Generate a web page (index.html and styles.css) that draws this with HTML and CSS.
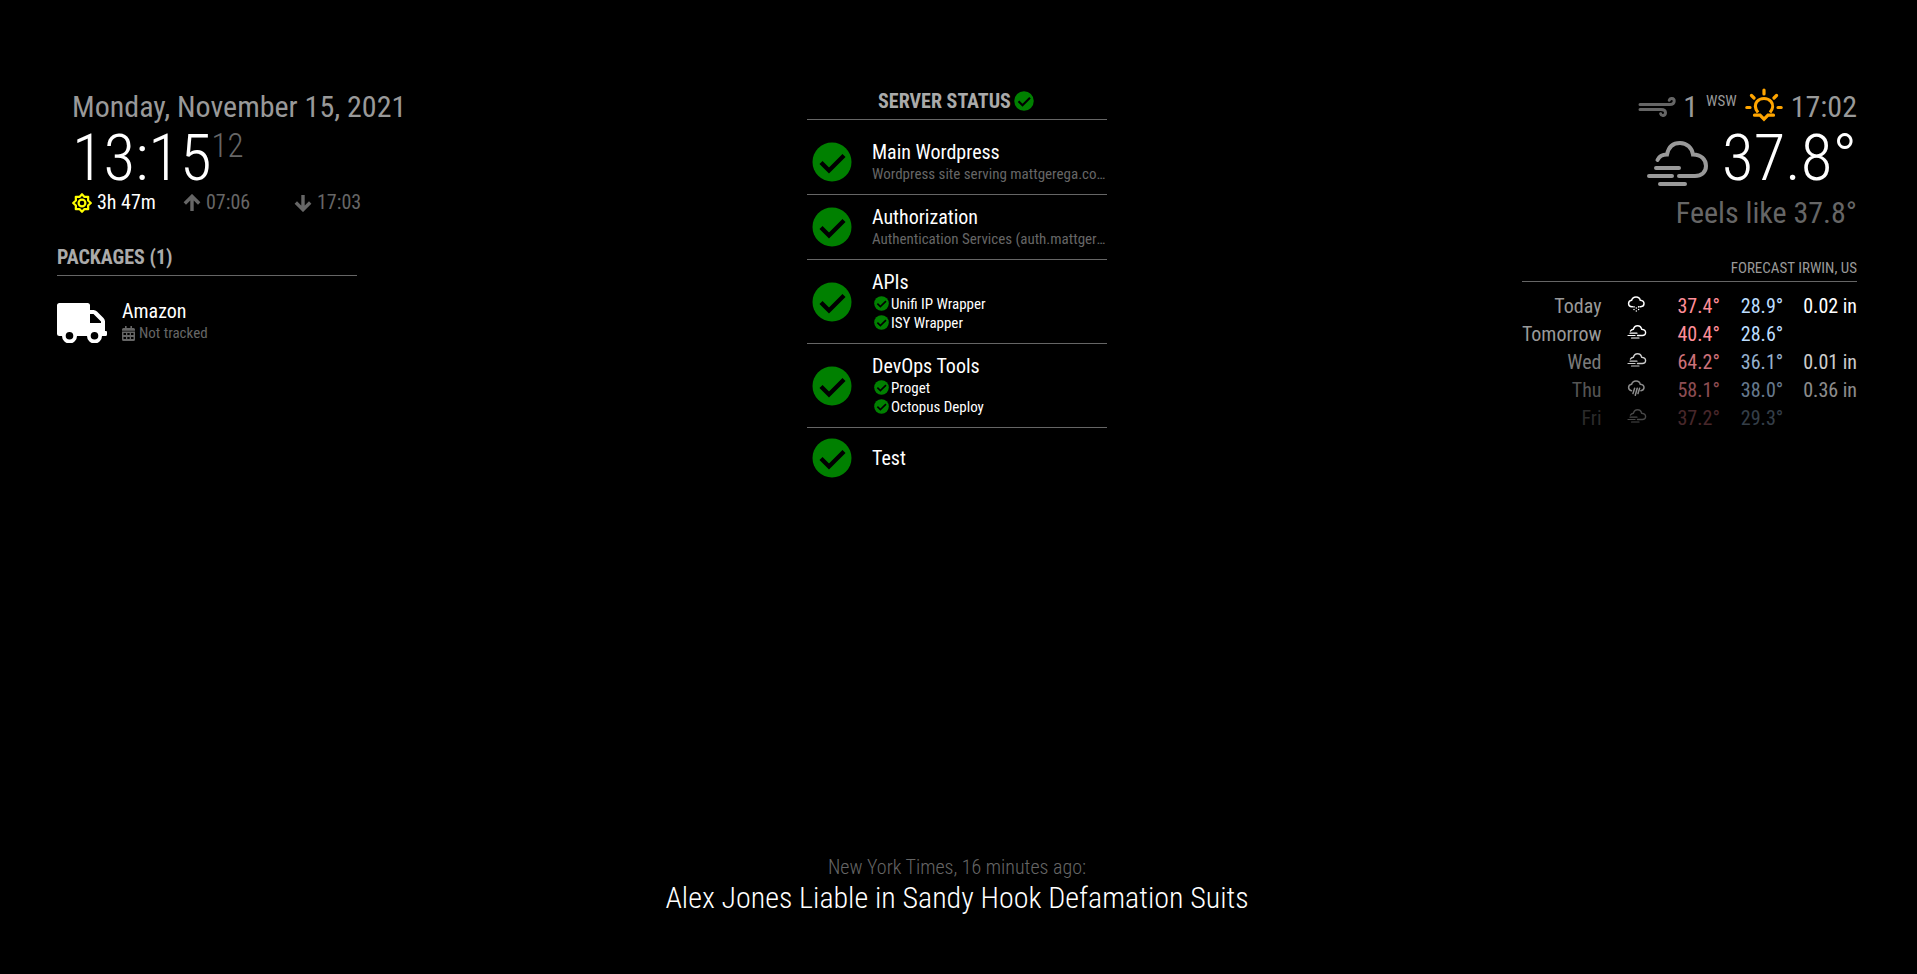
FILE: index.html
```html
<!DOCTYPE html>
<html lang="en">
<head>
<meta charset="utf-8">
<title>Mirror</title>
<link rel="stylesheet" href="styles.css">
</head>
<body>
<svg class="sprite" aria-hidden="true">
  <symbol id="check" viewBox="0 0 40 40"><circle cx="20" cy="20" r="19.500" fill="#008000"/><path d="M9 20.500 17 28.500 32 13.500" fill="none" stroke="#000" stroke-width="4.400"/></symbol>
  <symbol id="fog" viewBox="0 0 62 46"><g fill="none" stroke="currentColor" stroke-width="4" stroke-linecap="round"><path d="M10.500 20C12 16.500 15 14.500 20 14.500C21.500 7 26 3 33 3C40 3 45 8 46 14.500C54 14.500 59 19.500 59 26C59 32.500 54 36 48 36H32"/><path d="M9 28H32M2 36H25M13 44H38"/></g></symbol>
  <symbol id="fog-small" viewBox="0 0 20 16"><g fill="none" stroke="currentColor" stroke-width="1.400" stroke-linecap="round"><path d="M3.500 7C4 6 5 5.300 6.400 5.200C7 2.900 8.300 1.700 10.500 1.700C12.700 1.700 14.200 3 14.600 5.200C17.200 5.400 18.600 6.800 18.600 8.600C18.600 10.500 17.200 11.500 15.200 11.500H10.500"/><path stroke-width="1.200" d="M3 9.200H10M1 11.500H8M4.500 14H12"/></g></symbol>
  <symbol id="snow" viewBox="0 0 20 16"><g fill="none" stroke="currentColor" stroke-width="1.500" stroke-linecap="round"><path d="M5.500 10.700H5C3 10.700 1.600 9.300 1.600 7.500C1.600 5.800 2.900 4.500 4.600 4.300C5.200 2.200 6.800 1 9 1C11.200 1 12.900 2.300 13.300 4.300C15.600 4.500 17 5.800 17 7.600C17 9.300 15.600 10.700 13.700 10.700H13"/><path d="M7 10.800V10.900M11.600 10.800V10.900M9.300 12V12.100M7 13.500V13.600M11.600 13.500V13.600M9.300 15V15.100"/></g></symbol>
  <symbol id="rain" viewBox="0 0 20 16"><g fill="none" stroke="currentColor" stroke-width="1.500" stroke-linecap="round"><path d="M4.500 10.700C3 10.400 1.600 9.300 1.600 7.500C1.600 5.800 2.900 4.500 4.600 4.300C5.200 2.200 6.800 1 9 1C11.200 1 12.900 2.300 13.300 4.300C15.600 4.500 17 5.800 17 7.600C17 9.300 15.600 10.500 13.900 10.700"/><path d="M7.600 8.300 6 13.500M10.200 8.300 8.300 15.200M12.600 8.300 11 13.500"/></g></symbol>
</svg>

<main class="board">
  <div class="column">
    <section class="module clock">
      <div class="date">Monday, November 15, 2021</div>
      <div class="time">13:15<span class="seconds">12</span></div>
      <div class="sun-times">
        <span class="sun-item remaining"><svg class="icon-sun" viewBox="0 0 20 20"><g fill="none" stroke="#ff0" stroke-width="2.200" stroke-linejoin="round"><path d="M10 1.200 12.500 3.900 16.200 3.800 16.100 7.500 18.800 10 16.100 12.500 16.200 16.200 12.500 16.100 10 18.800 7.500 16.100 3.800 16.200 3.900 12.500 1.200 10 3.900 7.500 3.800 3.800 7.500 3.900Z"/><circle cx="10" cy="10" r="3.400"/></g></svg>3h 47m</span>
        <span class="sun-item"><svg class="icon-arrow" viewBox="0 0 18 18"><path d="M9 17V3M1.800 9.500 9 2.300 16.200 9.500" fill="none" stroke="currentColor" stroke-width="3.400"/></svg>07:06</span>
        <span class="sun-item"><svg class="icon-arrow" viewBox="0 0 18 18"><path d="M9 1V15M1.800 8.500 9 15.700 16.200 8.500" fill="none" stroke="currentColor" stroke-width="3.400"/></svg>17:03</span>
      </div>
    </section>
    <section class="module packages">
      <h2 class="title">Packages (1)</h2>
      <div class="package">
        <svg class="icon-truck" viewBox="0 0 50 40"><path fill-rule="evenodd" fill="#fff" d="M2.500 0H30.500Q33 0 33 2.500V7H36.500Q38.500 7 40 8.500L46.500 15Q48 16.500 48 18.500V28H49Q50 28 50 29V31.500Q50 33 48.500 33H45A7.500 7.500 0 0 1 30 33H20A7.500 7.500 0 0 1 5 33H2.500Q0 33 0 30.500V2.500Q0 0 2.500 0ZM33 11V20H44V18.500L36.500 11ZM12.500 29A3.800 3.800 0 1 0 12.500 36.600A3.800 3.800 0 1 0 12.500 29ZM37.500 29A3.800 3.800 0 1 0 37.500 36.600A3.800 3.800 0 1 0 37.500 29Z"/></svg>
        <div>
          <div class="name">Amazon</div>
          <div class="detail tracked"><svg class="icon-calendar" viewBox="0 0 13 15"><path fill="currentColor" fill-rule="evenodd" d="M3 0H4.600V2H8.400V0H10V2H11.500Q13 2 13 3.500V4.700H0V3.500Q0 2 1.500 2H3ZM0 5.500H13V13.500Q13 15 11.500 15H1.500Q0 15 0 13.500ZM1.500 7V9H4V7ZM5.300 7V9H7.700V7ZM9 7V9H11.500V7ZM1.500 11V13H4V11ZM5.300 11V13H7.700V11ZM9 11V13H11.500V11Z"/></svg>Not tracked</div>
        </div>
      </div>
    </section>
  </div>

  <section class="status">
    <h2 class="title centered">Server Status<svg class="check-title"><use href="#check"/></svg></h2>
    <ul class="servers">
      <li class="server"><svg class="check-large"><use href="#check"/></svg><div class="info"><div class="name">Main Wordpress</div><div class="detail">Wordpress site serving mattgerega.com</div></div></li>
      <li class="server"><svg class="check-large"><use href="#check"/></svg><div class="info"><div class="name">Authorization</div><div class="detail">Authentication Services (auth.mattgerega.com)</div></div></li>
      <li class="server"><svg class="check-large"><use href="#check"/></svg><div class="info"><div class="name">APIs</div><div class="child"><svg class="check-small"><use href="#check"/></svg>Unifi IP Wrapper</div><div class="child"><svg class="check-small"><use href="#check"/></svg>ISY Wrapper</div></div></li>
      <li class="server"><svg class="check-large"><use href="#check"/></svg><div class="info"><div class="name">DevOps Tools</div><div class="child"><svg class="check-small"><use href="#check"/></svg>Proget</div><div class="child"><svg class="check-small"><use href="#check"/></svg>Octopus Deploy</div></div></li>
      <li class="server"><svg class="check-large"><use href="#check"/></svg><div class="info"><div class="name">Test</div></div></li>
    </ul>
  </section>

  <div class="column right">
    <section class="module weather">
      <div class="conditions">
        <span class="wind"><svg class="icon-wind" viewBox="0 0 38 20"><g fill="none" stroke="#666" stroke-width="3" stroke-linecap="round"><path d="M2 7.500H31.500C34.500 7.500 36.200 6 36.200 4C36.200 0.800 32 0.800 31.300 3.200"/><path d="M2 12.500H23C26 12.500 27.500 14 27.500 15.800C27.500 19 23.400 19.200 22.700 16.800"/></g></svg>1</span>
        <span class="direction">WSW</span>
        <svg class="icon-sunset" viewBox="0 0 38 34"><g fill="none" stroke="#ffa500" stroke-width="3.200"><path d="M13 24.500C9.500 20.500 9.800 16 12 13.500C15.500 9.500 22.500 9.500 26 13.500C28.500 16.500 28 21 25 24.500"/><path stroke-linecap="round" d="M19 2V6M6.500 7.500 9 10M31.500 7.500 29 10M1.800 19.500H5M33 19.500H36.200M9.500 27.200H15L19 31.200 23 27.200H28.500"/></g></svg>
        <span>17:02</span>
      </div>
      <div class="current"><svg class="icon-current"><use href="#fog"/></svg><span>37.8°</span></div>
      <div class="feels">Feels like 37.8°</div>
    </section>
    <section class="module forecast">
      <h2 class="title small">Forecast Irwin, US</h2>
      <table class="days">
        <tr><td class="day">Today</td><td class="sky"><svg class="icon-day"><use href="#snow"/></svg></td><td class="high">37.4°</td><td class="low">28.9°</td><td class="rain">0.02 in</td></tr>
        <tr><td class="day">Tomorrow</td><td class="sky"><svg class="icon-day"><use href="#fog-small"/></svg></td><td class="high">40.4°</td><td class="low">28.6°</td><td class="rain"></td></tr>
        <tr class="fade-one"><td class="day">Wed</td><td class="sky"><svg class="icon-day"><use href="#fog-small"/></svg></td><td class="high">64.2°</td><td class="low">36.1°</td><td class="rain">0.01 in</td></tr>
        <tr class="fade-two"><td class="day">Thu</td><td class="sky"><svg class="icon-day"><use href="#rain"/></svg></td><td class="high">58.1°</td><td class="low">38.0°</td><td class="rain">0.36 in</td></tr>
        <tr class="fade-three"><td class="day">Fri</td><td class="sky"><svg class="icon-day"><use href="#fog-small"/></svg></td><td class="high">37.2°</td><td class="low">29.3°</td><td class="rain"></td></tr>
      </table>
    </section>
  </div>
</main>

<footer class="news">
  <div class="source">New York Times, 16 minutes ago:</div>
  <div class="headline">Alex Jones Liable in Sandy Hook Defamation Suits</div>
</footer>
</body>
</html>
```
FILE: styles.css
```css
* { box-sizing: border-box; }

body {
  display: flex;
  flex-direction: column;
  min-height: 100vh;
  margin: 0;
  padding: 89px 60px 59px 57px;
  background: #000;
  color: #fff;
  font: 400 20px/25px "Roboto Condensed", Roboto, sans-serif;
}

.sprite { position: absolute; width: 0; height: 0; }
svg { display: block; flex: none; }

.board {
  display: grid;
  grid-template-columns: 1fr 300px 1fr;
  flex: 1;
  align-items: start;
}

.column { display: flex; flex-direction: column; align-items: flex-start; gap: 30px; }
.right { align-items: flex-end; gap: 28px; }

.title {
  margin: 0;
  padding-bottom: 5px;
  border-bottom: 1px solid #666;
  color: #aaa;
  font-size: 20px;
  font-weight: 700;
  line-height: 25px;
  text-transform: uppercase;
}
.title.centered { display: flex; justify-content: center; align-items: center; gap: 3px; padding-right: 2px; }
.title.small { padding-bottom: 3px; color: #999; font-size: 15px; font-weight: 400; line-height: 20px; text-align: right; }

.clock { padding-left: 15px; }
.date { color: #999; font-size: 30px; line-height: 35px; }
.time { display: flex; padding-top: 2px; font-size: 65px; font-weight: 300; line-height: 64px; }
.seconds { color: #666; font-size: 33px; line-height: 40px; }
.sun-times { display: flex; color: #666; }
.sun-item { display: flex; align-items: center; gap: 5px; width: 111px; }
.remaining { color: #fff; }
.icon-sun { width: 20px; height: 20px; }
.icon-arrow { width: 18px; height: 18px; }

.packages { width: 300px; }
.package { display: flex; align-items: flex-start; gap: 15px; padding-top: 23px; }
.icon-truck { width: 50px; height: 40px; margin-top: 4px; }
.detail {
  overflow: hidden;
  color: #666;
  font-size: 15px;
  line-height: 19px;
  text-overflow: ellipsis;
  white-space: nowrap;
}
.tracked { display: flex; align-items: center; gap: 4px; }
.icon-calendar { width: 13px; height: 15px; }

.servers { margin: 0; padding: 10px 0 0; list-style: none; }
.server { display: flex; align-items: center; gap: 20px; padding: 10px 0 10px 5px; border-bottom: 1px solid #666; }
.server:last-child { border-bottom: 0; }
.info { flex: 1; min-width: 0; }
.check-large { width: 40px; height: 40px; }
.check-title { width: 20px; height: 20px; margin-bottom: 2px; }
.check-small { width: 15px; height: 15px; margin-bottom: 2px; }
.child { display: flex; align-items: center; gap: 2px; padding-left: 2px; font-size: 15px; line-height: 19px; }

.conditions { display: flex; justify-content: flex-end; gap: 8px; color: #999; font-size: 30px; line-height: 35px; }
.wind { display: flex; gap: 7px; }
.direction { font-size: 15px; line-height: 25px; }
.icon-wind { width: 38px; height: 20px; margin-top: 8px; }
.icon-sunset { width: 38px; height: 34px; margin-top: -1px; }
.current { display: flex; justify-content: flex-end; gap: 13px; padding-top: 2px; font-size: 65px; font-weight: 300; line-height: 64px; }
.icon-current { width: 62px; height: 46px; margin-top: 14px; color: #999; }
.feels { padding-top: 5px; color: #666; font-size: 30px; line-height: 35px; text-align: right; }

.days { margin-top: 10px; border-collapse: collapse; line-height: 28px; text-align: right; }
.days td { padding: 0 0 0 22px; }
.days .day { padding: 0; color: #999; }
.days .sky { padding: 0 0 4px 26px; }
.days .high { padding-left: 30px; color: #ff8e99; }
.days .low { padding-left: 21px; color: #bcddff; }
.days .rain { padding-left: 20px; }
.icon-day { width: 20px; height: 16px; }
.fade-one { opacity: 0.8; }
.fade-two { opacity: 0.55; }
.fade-three { opacity: 0.28; }

.news { display: flex; flex-direction: column; align-items: center; font-weight: 300; }
.source { color: #666; }
.headline { font-size: 30px; line-height: 35px; }
```
